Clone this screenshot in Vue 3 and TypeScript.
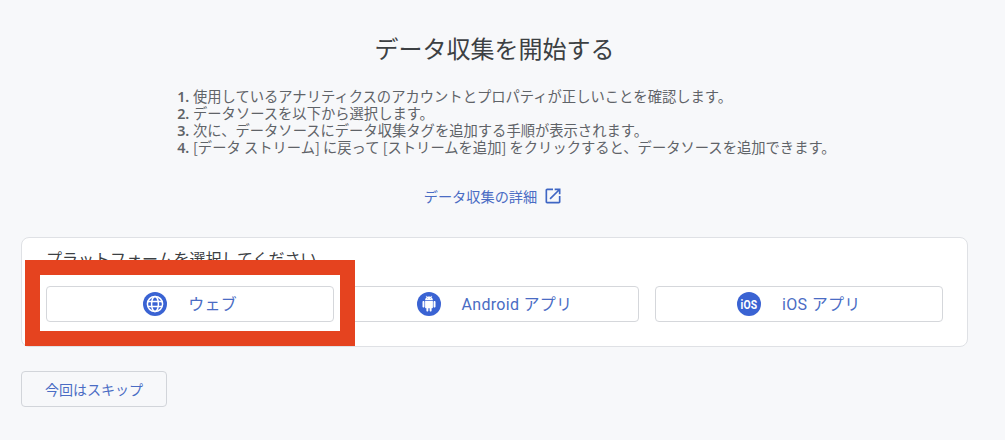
<script setup lang="ts">
const steps: string[] = [
  '使用しているアナリティクスのアカウントとプロパティが正しいことを確認します。',
  'データソースを以下から選択します。',
  '次に、データソースにデータ収集タグを追加する手順が表示されます。',
  '[データ ストリーム] に戻って [ストリームを追加] をクリックすると、データソースを追加できます。',
]
</script>

<template>
  <main class="page">
    <h1 class="title">データ収集を開始する</h1>
    <ol class="steps">
      <li v-for="step in steps" :key="step">{{ step }}</li>
    </ol>
    <a class="more">
      <span>データ収集の詳細</span>
      <svg class="ext" viewBox="0 0 24 24" width="20" height="20" aria-hidden="true">
        <path fill="#3f66c4" d="M19 19H5V5h7V3H5c-1.11 0-2 .9-2 2v14c0 1.1.89 2 2 2h14c1.1 0 2-.9 2-2v-7h-2v7zM14 3v2h3.59l-9.83 9.83 1.41 1.41L19 6.41V10h2V3h-7z" />
      </svg>
    </a>
    <section class="card">
      <h2 class="card-title">プラットフォームを選択してください</h2>
      <div class="platforms">
        <button class="platform">
          <svg viewBox="0 0 24 24" width="24" height="24" aria-hidden="true">
            <circle cx="12" cy="12" r="12" fill="#3a63d3" />
            <g fill="none" stroke="#fff" stroke-width="1.5">
              <circle cx="12" cy="12" r="7.6" />
              <ellipse cx="12" cy="12" rx="3.4" ry="7.6" />
              <path d="M5 9.4h14M5 14.6h14" />
            </g>
          </svg>
          <span>ウェブ</span>
        </button>
        <button class="platform">
          <svg viewBox="0 0 24 24" width="24" height="24" aria-hidden="true">
            <circle cx="12" cy="12" r="12" fill="#3a63d3" />
            <g transform="translate(4.2 3.8) scale(0.65)">
              <path fill="#fff" d="M6 18c0 .55.45 1 1 1h1v3.5c0 .83.67 1.5 1.5 1.5s1.5-.67 1.5-1.5V19h2v3.5c0 .83.67 1.5 1.5 1.5s1.5-.67 1.5-1.5V19h1c.55 0 1-.45 1-1V8H6v10zM3.5 8C2.67 8 2 8.67 2 9.5v7c0 .83.67 1.5 1.5 1.5S5 17.33 5 16.5v-7C5 8.67 4.33 8 3.5 8zm17 0c-.83 0-1.5.67-1.5 1.5v7c0 .83.67 1.5 1.5 1.5s1.5-.67 1.5-1.5v-7c0-.83-.67-1.5-1.5-1.5zm-4.97-5.84l1.3-1.3c.2-.2.2-.51 0-.71-.2-.2-.51-.2-.71 0l-1.48 1.48C13.85 1.23 12.95 1 12 1c-.96 0-1.86.23-2.66.63L7.85.15c-.2-.2-.51-.2-.71 0-.2.2-.2.51 0 .71l1.31 1.31C6.97 3.26 6 5.01 6 7h12c0-1.99-.97-3.75-2.47-4.84zM10 5H9V4h1v1zm5 0h-1V4h1v1z" />
            </g>
          </svg>
          <span>Android アプリ</span>
        </button>
        <button class="platform">
          <svg viewBox="0 0 24 24" width="24" height="24" aria-hidden="true">
            <circle cx="12" cy="12" r="12" fill="#3a63d3" />
            <text x="12" y="16.6" text-anchor="middle" textLength="17" lengthAdjust="spacingAndGlyphs" class="ios">iOS</text>
          </svg>
          <span>iOS アプリ</span>
        </button>
      </div>
      <div class="highlight"></div>
    </section>
    <button class="skip">今回はスキップ</button>
  </main>
</template>

<style>
html, body { margin: 0; background: #f7f8fa; }
</style>

<style scoped>
.page {
  box-sizing: border-box;
  width: 1005px;
  height: 440px;
  overflow: hidden;
  padding: 30px 37px 0 21px;
  background: #f7f8fa;
  font-family: "Noto Sans CJK JP", "Noto Sans", sans-serif;
  color: #4a4d52;
}
.title {
  margin: 0;
  height: 35px;
  line-height: 35px;
  text-align: center;
  font-size: 24px;
  font-weight: 400;
  color: #3c4043;
}
.steps {
  width: 637px;
  margin: 22px auto 0;
  padding: 0 0 0 17px;
  box-sizing: border-box;
  font-size: 14.3px;
  line-height: 17px;
  color: #5f6368;
  white-space: nowrap;
}
.steps li { padding: 0; }
.steps li::marker { font-family: "Noto Sans", sans-serif; font-weight: 600; }
.more {
  display: flex;
  justify-content: center;
  align-items: center;
  gap: 6px;
  margin-top: 30px;
  padding-right: 2px;
  height: 22px;
  font-size: 14.2px;
  color: #4a6cc4;
}
.ext { display: block; }
.card {
  position: relative;
  box-sizing: border-box;
  height: 110px;
  margin-top: 30px;
  padding: 8px 24px 0;
  background: #fff;
  border: 1px solid #dfe1e5;
  border-radius: 8px;
}
.card-title {
  margin: 0;
  height: 24px;
  line-height: 24px;
  font-size: 16px;
  font-weight: 400;
  color: #3c4043;
}
.platforms {
  display: grid;
  grid-template-columns: repeat(3, 1fr);
  gap: 16px;
  margin-top: 16px;
}
.platform {
  display: flex;
  justify-content: center;
  align-items: center;
  gap: 21px;
  height: 36px;
  padding: 0;
  background: #fff;
  border: 1px solid #d5d7db;
  border-radius: 4px;
  font-family: "Roboto", "Noto Sans CJK JP", sans-serif;
  font-size: 16px;
  letter-spacing: 0.3px;
  color: #4a6cc4;
}
.platform span { margin-bottom: 3px; }
.platform svg { flex: none; display: block; }
.ios {
  font-family: "Roboto", sans-serif;
  font-size: 13px;
  font-weight: 700;
  fill: #fff;
}
.highlight {
  position: absolute;
  left: 3px;
  top: 22px;
  box-sizing: border-box;
  width: 330px;
  height: 86px;
  border: 15px solid #e5431f;
}
.skip {
  display: block;
  box-sizing: border-box;
  width: 146px;
  height: 36px;
  margin-top: 24px;
  padding: 0;
  background: #f7f8fa;
  border: 1px solid #d2d5da;
  border-radius: 4px;
  font-family: "Noto Sans CJK JP", sans-serif;
  font-size: 14px;
  color: #4a6cc4;
}
</style>
